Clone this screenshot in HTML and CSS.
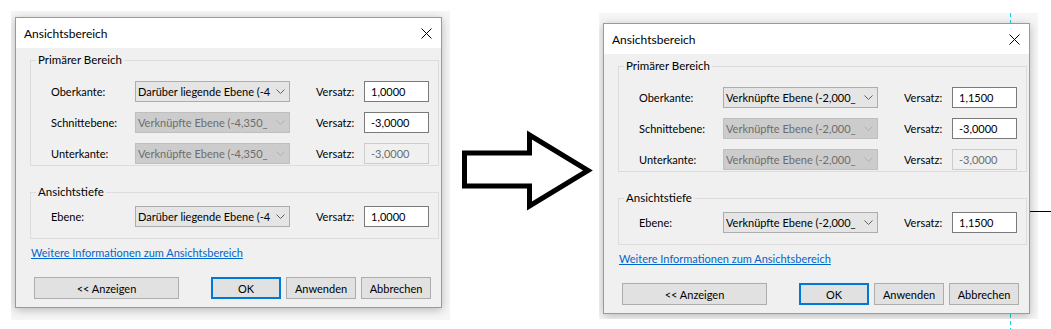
FILE: index.html
```html
<!DOCTYPE html>
<html>
<head>
  <meta charset="utf-8">
  <title>Ansichtsbereich</title>
  <link rel="stylesheet" href="styles.css">
</head>
<body>
  <div class="stage">
    <div class="guide-v"></div>
    <div class="guide-h"></div>

    <!-- before -->
    <div class="shot shot-before">
      <div class="dialog">
        <div class="titlebar">
          <span class="title">Ansichtsbereich</span>
          <svg class="close" width="11" height="11" viewBox="0 0 11 11"><path d="M0.5 0.5 L10.5 10.5 M10.5 0.5 L0.5 10.5" stroke="#000" stroke-width="1"/></svg>
        </div>
        <div class="dialog-body">
          <fieldset class="group">
            <legend>Primärer Bereich</legend>
            <div class="row">
              <label class="row-label">Oberkante:</label>
              <div class="combo"><span class="combo-text">Darüber liegende Ebene (-4</span><svg class="chevron" width="9" height="5" viewBox="0 0 9 5"><path d="M0.5 0.5 L4.5 4.5 L8.5 0.5" fill="none" stroke="currentColor"/></svg></div>
              <label class="offset-label">Versatz:</label>
              <div class="field">1,0000</div>
            </div>
            <div class="row">
              <label class="row-label">Schnittebene:</label>
              <div class="combo disabled"><span class="combo-text">Verknüpfte Ebene (-4,350_</span><svg class="chevron" width="9" height="5" viewBox="0 0 9 5"><path d="M0.5 0.5 L4.5 4.5 L8.5 0.5" fill="none" stroke="currentColor"/></svg></div>
              <label class="offset-label">Versatz:</label>
              <div class="field">-3,0000</div>
            </div>
            <div class="row">
              <label class="row-label">Unterkante:</label>
              <div class="combo disabled"><span class="combo-text">Verknüpfte Ebene (-4,350_</span><svg class="chevron" width="9" height="5" viewBox="0 0 9 5"><path d="M0.5 0.5 L4.5 4.5 L8.5 0.5" fill="none" stroke="currentColor"/></svg></div>
              <label class="offset-label">Versatz:</label>
              <div class="field disabled">-3,0000</div>
            </div>
          </fieldset>
          <fieldset class="group group-depth">
            <legend>Ansichtstiefe</legend>
            <div class="row">
              <label class="row-label">Ebene:</label>
              <div class="combo"><span class="combo-text">Darüber liegende Ebene (-4</span><svg class="chevron" width="9" height="5" viewBox="0 0 9 5"><path d="M0.5 0.5 L4.5 4.5 L8.5 0.5" fill="none" stroke="currentColor"/></svg></div>
              <label class="offset-label">Versatz:</label>
              <div class="field">1,0000</div>
            </div>
          </fieldset>
          <a class="more-link" href="#">Weitere Informationen zum Ansichtsbereich</a>
          <div class="buttons">
            <button class="btn btn-wide">&lt;&lt; Anzeigen</button>
            <button class="btn btn-default">OK</button>
            <button class="btn">Anwenden</button>
            <button class="btn">Abbrechen</button>
          </div>
        </div>
      </div>
    </div>

    <svg class="arrow" width="140" height="90" viewBox="0 0 140 90">
      <polygon points="6.5,28 71.5,28 71.5,10 130,45.5 71.5,81 71.5,61 6.5,61" fill="#fff" stroke="#000" stroke-width="5" stroke-linejoin="miter"/>
    </svg>

    <!-- after -->
    <div class="shot shot-after">
      <div class="dialog">
        <div class="titlebar">
          <span class="title">Ansichtsbereich</span>
          <svg class="close" width="11" height="11" viewBox="0 0 11 11"><path d="M0.5 0.5 L10.5 10.5 M10.5 0.5 L0.5 10.5" stroke="#000" stroke-width="1"/></svg>
        </div>
        <div class="dialog-body">
          <fieldset class="group">
            <legend>Primärer Bereich</legend>
            <div class="row">
              <label class="row-label">Oberkante:</label>
              <div class="combo"><span class="combo-text">Verknüpfte Ebene (-2,000_</span><svg class="chevron" width="9" height="5" viewBox="0 0 9 5"><path d="M0.5 0.5 L4.5 4.5 L8.5 0.5" fill="none" stroke="currentColor"/></svg></div>
              <label class="offset-label">Versatz:</label>
              <div class="field">1,1500</div>
            </div>
            <div class="row">
              <label class="row-label">Schnittebene:</label>
              <div class="combo disabled"><span class="combo-text">Verknüpfte Ebene (-2,000_</span><svg class="chevron" width="9" height="5" viewBox="0 0 9 5"><path d="M0.5 0.5 L4.5 4.5 L8.5 0.5" fill="none" stroke="currentColor"/></svg></div>
              <label class="offset-label">Versatz:</label>
              <div class="field">-3,0000</div>
            </div>
            <div class="row">
              <label class="row-label">Unterkante:</label>
              <div class="combo disabled"><span class="combo-text">Verknüpfte Ebene (-2,000_</span><svg class="chevron" width="9" height="5" viewBox="0 0 9 5"><path d="M0.5 0.5 L4.5 4.5 L8.5 0.5" fill="none" stroke="currentColor"/></svg></div>
              <label class="offset-label">Versatz:</label>
              <div class="field disabled">-3,0000</div>
            </div>
          </fieldset>
          <fieldset class="group group-depth">
            <legend>Ansichtstiefe</legend>
            <div class="row">
              <label class="row-label">Ebene:</label>
              <div class="combo"><span class="combo-text">Verknüpfte Ebene (-2,000_</span><svg class="chevron" width="9" height="5" viewBox="0 0 9 5"><path d="M0.5 0.5 L4.5 4.5 L8.5 0.5" fill="none" stroke="currentColor"/></svg></div>
              <label class="offset-label">Versatz:</label>
              <div class="field">1,1500</div>
            </div>
          </fieldset>
          <a class="more-link" href="#">Weitere Informationen zum Ansichtsbereich</a>
          <div class="buttons">
            <button class="btn btn-wide">&lt;&lt; Anzeigen</button>
            <button class="btn btn-default">OK</button>
            <button class="btn">Anwenden</button>
            <button class="btn">Abbrechen</button>
          </div>
        </div>
      </div>
    </div>
  </div>
</body>
</html>
```

FILE: styles.css
```css
/* page */
body {
  margin: 0;
  background: #fff;
  font-family: Lato, "Liberation Sans", sans-serif;
  font-size: 11px;
  color: #000;
}

.stage {
  position: relative;
  display: flex;
  align-items: flex-start;
  width: 1051px;
  height: 329px;
  overflow: hidden;
}

/* drawing lines behind the second window */
.guide-v {
  position: absolute;
  left: 1010px;
  top: 13px;
  bottom: 0;
  width: 1px;
  z-index: 1;
  background: repeating-linear-gradient(to bottom, #19d3e6 0 4px, transparent 4px 7px);
}

.guide-h {
  position: absolute;
  left: 1029px;
  right: 0;
  top: 211px;
  height: 1px;
  z-index: 1;
  background: #000;
}

/* screenshot crops with window shadow */
.shot {
  flex: none;
  overflow: hidden;
  background: #f6f6f6;
}

.shot-before {
  margin: 11px 0 0 11px;
  padding: 6px 8px 12px 4px;
}

.shot-after {
  margin: 13px 0 0 1px;
  padding: 10px 8px 5px 4px;
}

.arrow {
  flex: none;
  display: block;
  margin: 125px 0 0 8px;
}

/* dialog */
.dialog {
  position: relative;
  z-index: 2;
  width: 427px;
  box-sizing: border-box;
  border: 1px solid #9a9a9a;
  background: #f0f0f0;
  box-shadow: 0 2px 9px rgba(0, 0, 0, 0.25);
}

.titlebar {
  display: flex;
  align-items: center;
  justify-content: space-between;
  height: 30px;
  padding: 0 9px 0 8px;
  background: #fff;
  font-size: 12px;
}

.close {
  display: block;
}

.dialog-body {
  padding: 4px 2px 8px 14px;
}

/* groups */
.group {
  margin: 0;
  padding: 13px 0 1px 20px;
  border: 1px solid #dcdcdc;
}

.group legend {
  margin-left: -15px;
  padding: 0 2px;
  line-height: 16px;
  font-size: 11.5px;
}

.group-depth {
  margin-top: 18px;
  padding-top: 6px;
  padding-bottom: 11px;
}

.row {
  display: flex;
  align-items: center;
  height: 21px;
}

.row + .row {
  margin-top: 10px;
}

.row-label {
  width: 84px;
}

.offset-label {
  width: 48px;
  margin-left: 26px;
}

/* combo box */
.combo {
  display: flex;
  align-items: center;
  width: 155px;
  height: 21px;
  box-sizing: border-box;
  border: 1px solid #adadad;
  background: #e5e5e5;
  color: #606060;
}

.combo-text {
  width: 135px;
  padding-left: 2px;
  white-space: nowrap;
  color: #000;
}

.chevron {
  display: block;
  margin-left: 3px;
}

.combo.disabled {
  border-color: #bfbfbf;
  background: #cccccc;
  color: #b0b0b0;
}

.combo.disabled .combo-text {
  color: #6d6d6d;
}

/* text field */
.field {
  width: 65px;
  height: 21px;
  box-sizing: border-box;
  padding-left: 6px;
  border: 1px solid #7a7a7a;
  background: #fff;
  line-height: 19px;
}

.field.disabled {
  border-color: #cccccc;
  background: #f0f0f0;
  color: #6d6d6d;
}

/* link and buttons */
.more-link {
  display: inline-block;
  margin: 6px 0 0 1px;
  line-height: 16px;
  color: #0066cc;
}

.buttons {
  display: flex;
  margin-top: 16px;
  padding-left: 4px;
}

.btn {
  width: 70px;
  height: 22px;
  box-sizing: border-box;
  margin-left: 5px;
  padding: 0;
  border: 1px solid #adadad;
  background: #e1e1e1;
  font: inherit;
  color: #000;
}

.btn-wide {
  width: 145px;
  margin-left: 0;
}

.btn-default {
  margin-left: 32px;
  border: 2px solid #0078d7;
}
```
